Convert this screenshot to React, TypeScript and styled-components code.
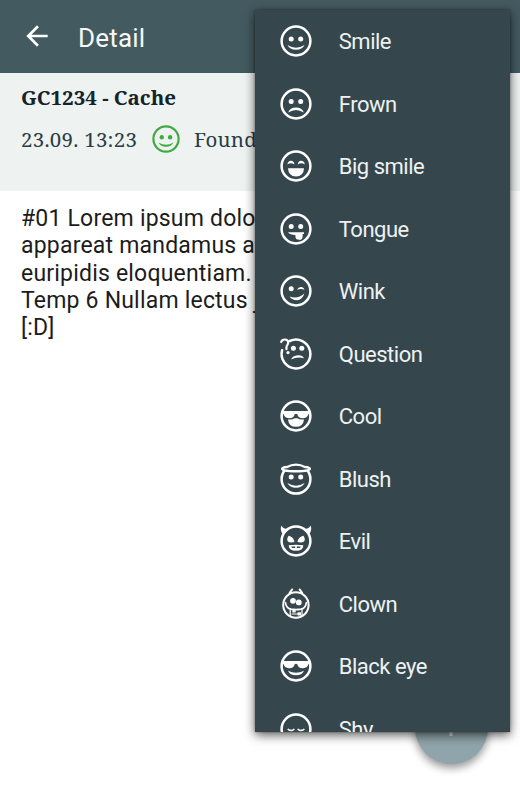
import React from "react";
import styled, { createGlobalStyle } from "styled-components";

const GlobalStyle = createGlobalStyle`
  html, body { margin: 0; padding: 0; background: #fff; overflow: hidden; }
`;

const Screen = styled.div`
  position: relative;
  width: 520px;
  height: 800px;
  overflow: hidden;
  background: #fff;
  font-family: Roboto, "Liberation Sans", sans-serif;
`;

const AppBar = styled.header`
  display: flex;
  align-items: center;
  height: 72.5px;
  padding: 0 0 0 20.5px;
  box-sizing: border-box;
  background: #435a60;
  color: #fff;
`;

const BackIcon = styled.svg`
  width: 32px;
  height: 32px;
  fill: #fff;
`;

const Title = styled.h1`
  margin: 3px 0 0 25.5px;
  font-size: 26px;
  line-height: 32px;
  font-weight: 400;
  letter-spacing: 0.2px;
  color: #f6f8f8;
`;

const LogHeader = styled.section`
  height: 118.5px;
  padding: 10px 21px 0;
  box-sizing: border-box;
  background: #eef2f1;
  font-family: "Noto Serif", "Droid Serif", "DejaVu Serif Condensed", "DejaVu Serif", serif;
  color: #14242a;
  white-space: nowrap;
`;

const CacheName = styled.h2`
  margin: 0;
  font-size: 20.5px;
  line-height: 28px;
  font-weight: 700;
`;

const LogMeta = styled.div`
  display: flex;
  align-items: center;
  height: 28px;
  margin-top: 14.5px;
  font-size: 20.5px;
  line-height: 28px;
  letter-spacing: 0.25px;
  color: #2b3d45;
`;

const LogDate = styled.span`
  width: 130.5px;
`;

const LogType = styled.span`
  margin-left: 14.5px;
`;

const LogText = styled.div`
  padding: 14px 21px 0;
  font-size: 23px;
  line-height: 27.3px;
  font-weight: 400;
  letter-spacing: 0.2px;
  color: #1c1c1c;
  white-space: nowrap;
`;

const Fab = styled.div`
  position: absolute;
  left: 415px;
  top: 691px;
  width: 72.5px;
  height: 72.5px;
  border-radius: 50%;
  background: #8fa4ab;
  box-shadow: 0 4px 9px rgba(0, 0, 0, 0.42);
  display: grid;
  place-items: center;
`;

const FabIcon = styled.svg`
  width: 20px;
  height: 20px;
  stroke: #d3dcdf;
  stroke-width: 3;
`;

const Menu = styled.ul`
  position: absolute;
  left: 255px;
  top: 10px;
  width: 254.5px;
  height: 722.3px;
  margin: 0;
  padding: 0;
  overflow: hidden;
  list-style: none;
  background: #35474d;
  box-shadow: 0 3px 10px rgba(0, 0, 0, 0.65), 0 0 2px rgba(0, 0, 0, 0.35);
`;

const MenuItem = styled.li`
  display: flex;
  align-items: center;
  height: 62.5px;
  padding-left: 25px;
  gap: 26.8px;
`;

const Label = styled.span`
  padding-top: 2px;
  font-size: 22px;
  line-height: 28px;
  letter-spacing: -0.5px;
  color: #eef1f1;
  white-space: nowrap;
`;

const Face = styled.svg<{ $size?: number; $color?: string }>`
  flex: none;
  width: ${(p) => p.$size ?? 32}px;
  height: ${(p) => p.$size ?? 32}px;
  color: ${(p) => p.$color ?? "#fff"};
  fill: currentColor;
  stroke: none;
  overflow: visible;
`;

const Line = styled.path<{ $w?: number }>`
  fill: none;
  stroke: currentColor;
  stroke-width: ${(p) => p.$w ?? 2};
  stroke-linecap: round;
`;

const Outline = styled.circle<{ $w?: number }>`
  fill: none;
  stroke: currentColor;
  stroke-width: ${(p) => p.$w ?? 2.5};
`;

const Ring = () => <Outline cx="16" cy="16" r="14.4" />;

const Eyes = ({ y = 14 }: { y?: number }) => (
  <>
    <circle cx="11.2" cy={y} r="2.5" />
    <circle cx="20.7" cy={y} r="2.5" />
  </>
);

const SMILE = "M7.4 20Q16 25.4 24.6 20Q22.2 24.8 16 24.8Q9.8 24.8 7.4 20Z";
const GRIN = "M8 18.2H24Q23.6 26.4 16 26.4Q8.4 26.4 8 18.2Z";
const SHADES =
  "M1 11H31V13.4L28.6 14Q27 18.3 22.6 18.3Q18.2 18.3 17.3 14.2Q16 13.2 14.7 14.2Q13.8 18.3 9.4 18.3Q5 18.3 3.4 14L1 13.4Z";

const faces: Record<string, React.ReactNode> = {
  Smile: (<><Ring /><Eyes /><path d={SMILE} /></>),
  Frown: (<><Ring /><Eyes y={13.6} /><path d="M8.2 24.4Q10 19.4 16 19.4Q22 19.4 23.8 24.4Q16 19.4 8.2 24.4Z" /></>),
  "Big smile": (
    <>
      <Ring />
      <path d="M7.4 14.4Q8 10.8 11 10.8Q14 10.8 14.4 14.4Q11 12.2 7.4 14.4Z" />
      <path d="M17.8 14.4Q18.2 10.8 21.2 10.8Q24.2 10.8 24.8 14.4Q21.2 12.2 17.8 14.4Z" />
      <path d={GRIN} />
    </>
  ),
  Tongue: (<><Ring /><Eyes y={13.6} /><path d="M8 19.2H24V21H22.6V23.4Q22.6 26.8 19.2 26.8Q15.4 26.8 15.4 23.2V21.9Q10 21.8 8 19.2Z" /></>),
  Wink: (
    <>
      <Ring />
      <circle cx="11.2" cy="13.7" r="2.5" />
      <path d="M17 14.8Q18.4 11.6 21.6 12Q24 12.4 24.6 14.8Q21 13.4 17 14.8Z" />
      <path d="M9.6 21.4Q17.6 24.6 24.3 18.4Q22.6 24.8 17 25.2Q12 25.2 9.6 21.4Z" />
    </>
  ),
  Question: (
    <>
      <Line $w={2.5} d="M9.8 3A14.4 14.4 0 1 1 2.1 12.2" />
      <Line $w={2.2} d="M1.2 4C2.2 .7 7.8 .5 8.2 4.2C8.4 7.3 5.7 7 6.5 11.2" />
      <circle cx="8" cy="14.6" r="1.6" />
      <circle cx="13.4" cy="10.2" r="2.5" />
      <circle cx="21.8" cy="10.2" r="2.5" />
      <path d="M11.2 21.6Q12.4 17.6 18 17.2Q22.6 17 24 20.2Q16.7 18.4 11.2 21.6Z" />
    </>
  ),
  Cool: (<><Ring /><path d={SHADES} /><path d="M8 19.4Q12.5 20 14.6 18.2H17.4Q19.5 20 24 19.4Q23.2 26.8 16 26.8Q8.8 26.8 8 19.4Z" /></>),
  Blush: (
    <>
      <Line $w={2.5} d="M4 8.2A14.4 14.4 0 1 0 28 8.2" />
      <Line $w={2.5} d="M6 3.9C3.4 4.3 2.2 4.9 2.2 5.7C2.2 7.4 8.5 8.3 16 8.3S29.8 7.4 29.8 5.7C29.8 4.9 28.6 4.3 26 3.9" />
      <Line $w={2.2} d="M6.6 4.2Q16 -1 25.4 4.2" />
      <Eyes />
      <path d={SMILE} />
    </>
  ),
  Evil: (
    <>
      <Ring />
      <path d="M1.3 .5Q3 4.1 8.8 4L3.2 9.5Q-.4 5.7 1.3 .5ZM30.7 .5Q29 4.1 23.2 4L28.8 9.5Q32.4 5.7 30.7 .5Z" />
      <path d="M8.6 10.8C11 11.4 14.5 13.6 14.4 17C11 17.8 7 17.6 7.2 14.2Q7.3 12.6 8.6 10.8ZM23.4 10.8C21 11.4 17.5 13.6 17.6 17C21 17.8 25 17.6 24.8 14.2Q24.7 12.6 23.4 10.8Z" />
      <path fillRule="evenodd" d="M8.6 20.2Q16 19.2 23.4 20.2Q23 25.8 16 25.8Q9 25.8 8.6 20.2ZM11.4 21.5L12 23H15.2V21.5ZM16.8 21.5V23H20L20.6 21.5Z" />
    </>
  ),
  Clown: (
    <>
      <Outline $w={2} cx="15.9" cy="17" r="12.7" />
      <Line $w={1.9} d="M9.6 4.8L12.2 1.4M22.2 4.8L19.6 1.4" />
      <circle cx="13" cy="12.8" r="2.9" />
      <circle cx="18.8" cy="14.4" r="2.9" />
      <Line $w={1.7} d="M5.4 14.6C6 18.6 8.4 20.6 11 21.2Q16 22.2 21 21.2C23.6 20.6 25.8 18.6 26.4 14.6" />
      <Line $w={1.2} d="M10.2 21V27.6M22 21V27.6M12 26H20" />
      <path d="M12.4 21.2H15.6V24.6H12.4ZM17.6 24.2H21V27.4H17.6Z" />
    </>
  ),
  "Black eye": (<><Ring /><path d={SHADES} /><path d="M8 20.7Q16 25 24 20.7Q22 25.2 16 25.2Q10 25.2 8 20.7Z" /></>),
  Shy: (<><Ring /><Line $w={1.5} d="M8.2 16.4Q11 18.6 13.9 16.4M18.1 16.4Q21 18.6 23.9 16.4" /></>),
};

export default function App() {
  return (
    <Screen>
      <GlobalStyle />
      <AppBar>
        <BackIcon viewBox="0 0 24 24">
          <path d="M20 11H7.83l5.59-5.59L12 4l-8 8 8 8 1.41-1.41L7.83 13H20v-2z" />
        </BackIcon>
        <Title>Detail</Title>
      </AppBar>
      <LogHeader>
        <CacheName>GC1234 - Cache</CacheName>
        <LogMeta>
          <LogDate>23.09. 13:23</LogDate>
          <Face viewBox="0 0 32 32" $size={28} $color="#3faa43">{faces.Smile}</Face>
          <LogType>Found it</LogType>
        </LogMeta>
      </LogHeader>
      <LogText>
        <div>#01 Lorem ipsum dolo</div>
        <div>appareat mandamus a</div>
        <div>euripidis eloquentiam.</div>
        <div>Temp 6 Nullam lectus j</div>
        <div>[:D]</div>
      </LogText>
      <Fab>
        <FabIcon viewBox="0 0 20 20">
          <path d="M10 1V19M1 10H19" />
        </FabIcon>
      </Fab>
      <Menu>
        {Object.entries(faces).map(([name, drawing]) => (
          <MenuItem key={name}>
            <Face viewBox="0 0 32 32">{drawing}</Face>
            <Label>{name}</Label>
          </MenuItem>
        ))}
      </Menu>
    </Screen>
  );
}
